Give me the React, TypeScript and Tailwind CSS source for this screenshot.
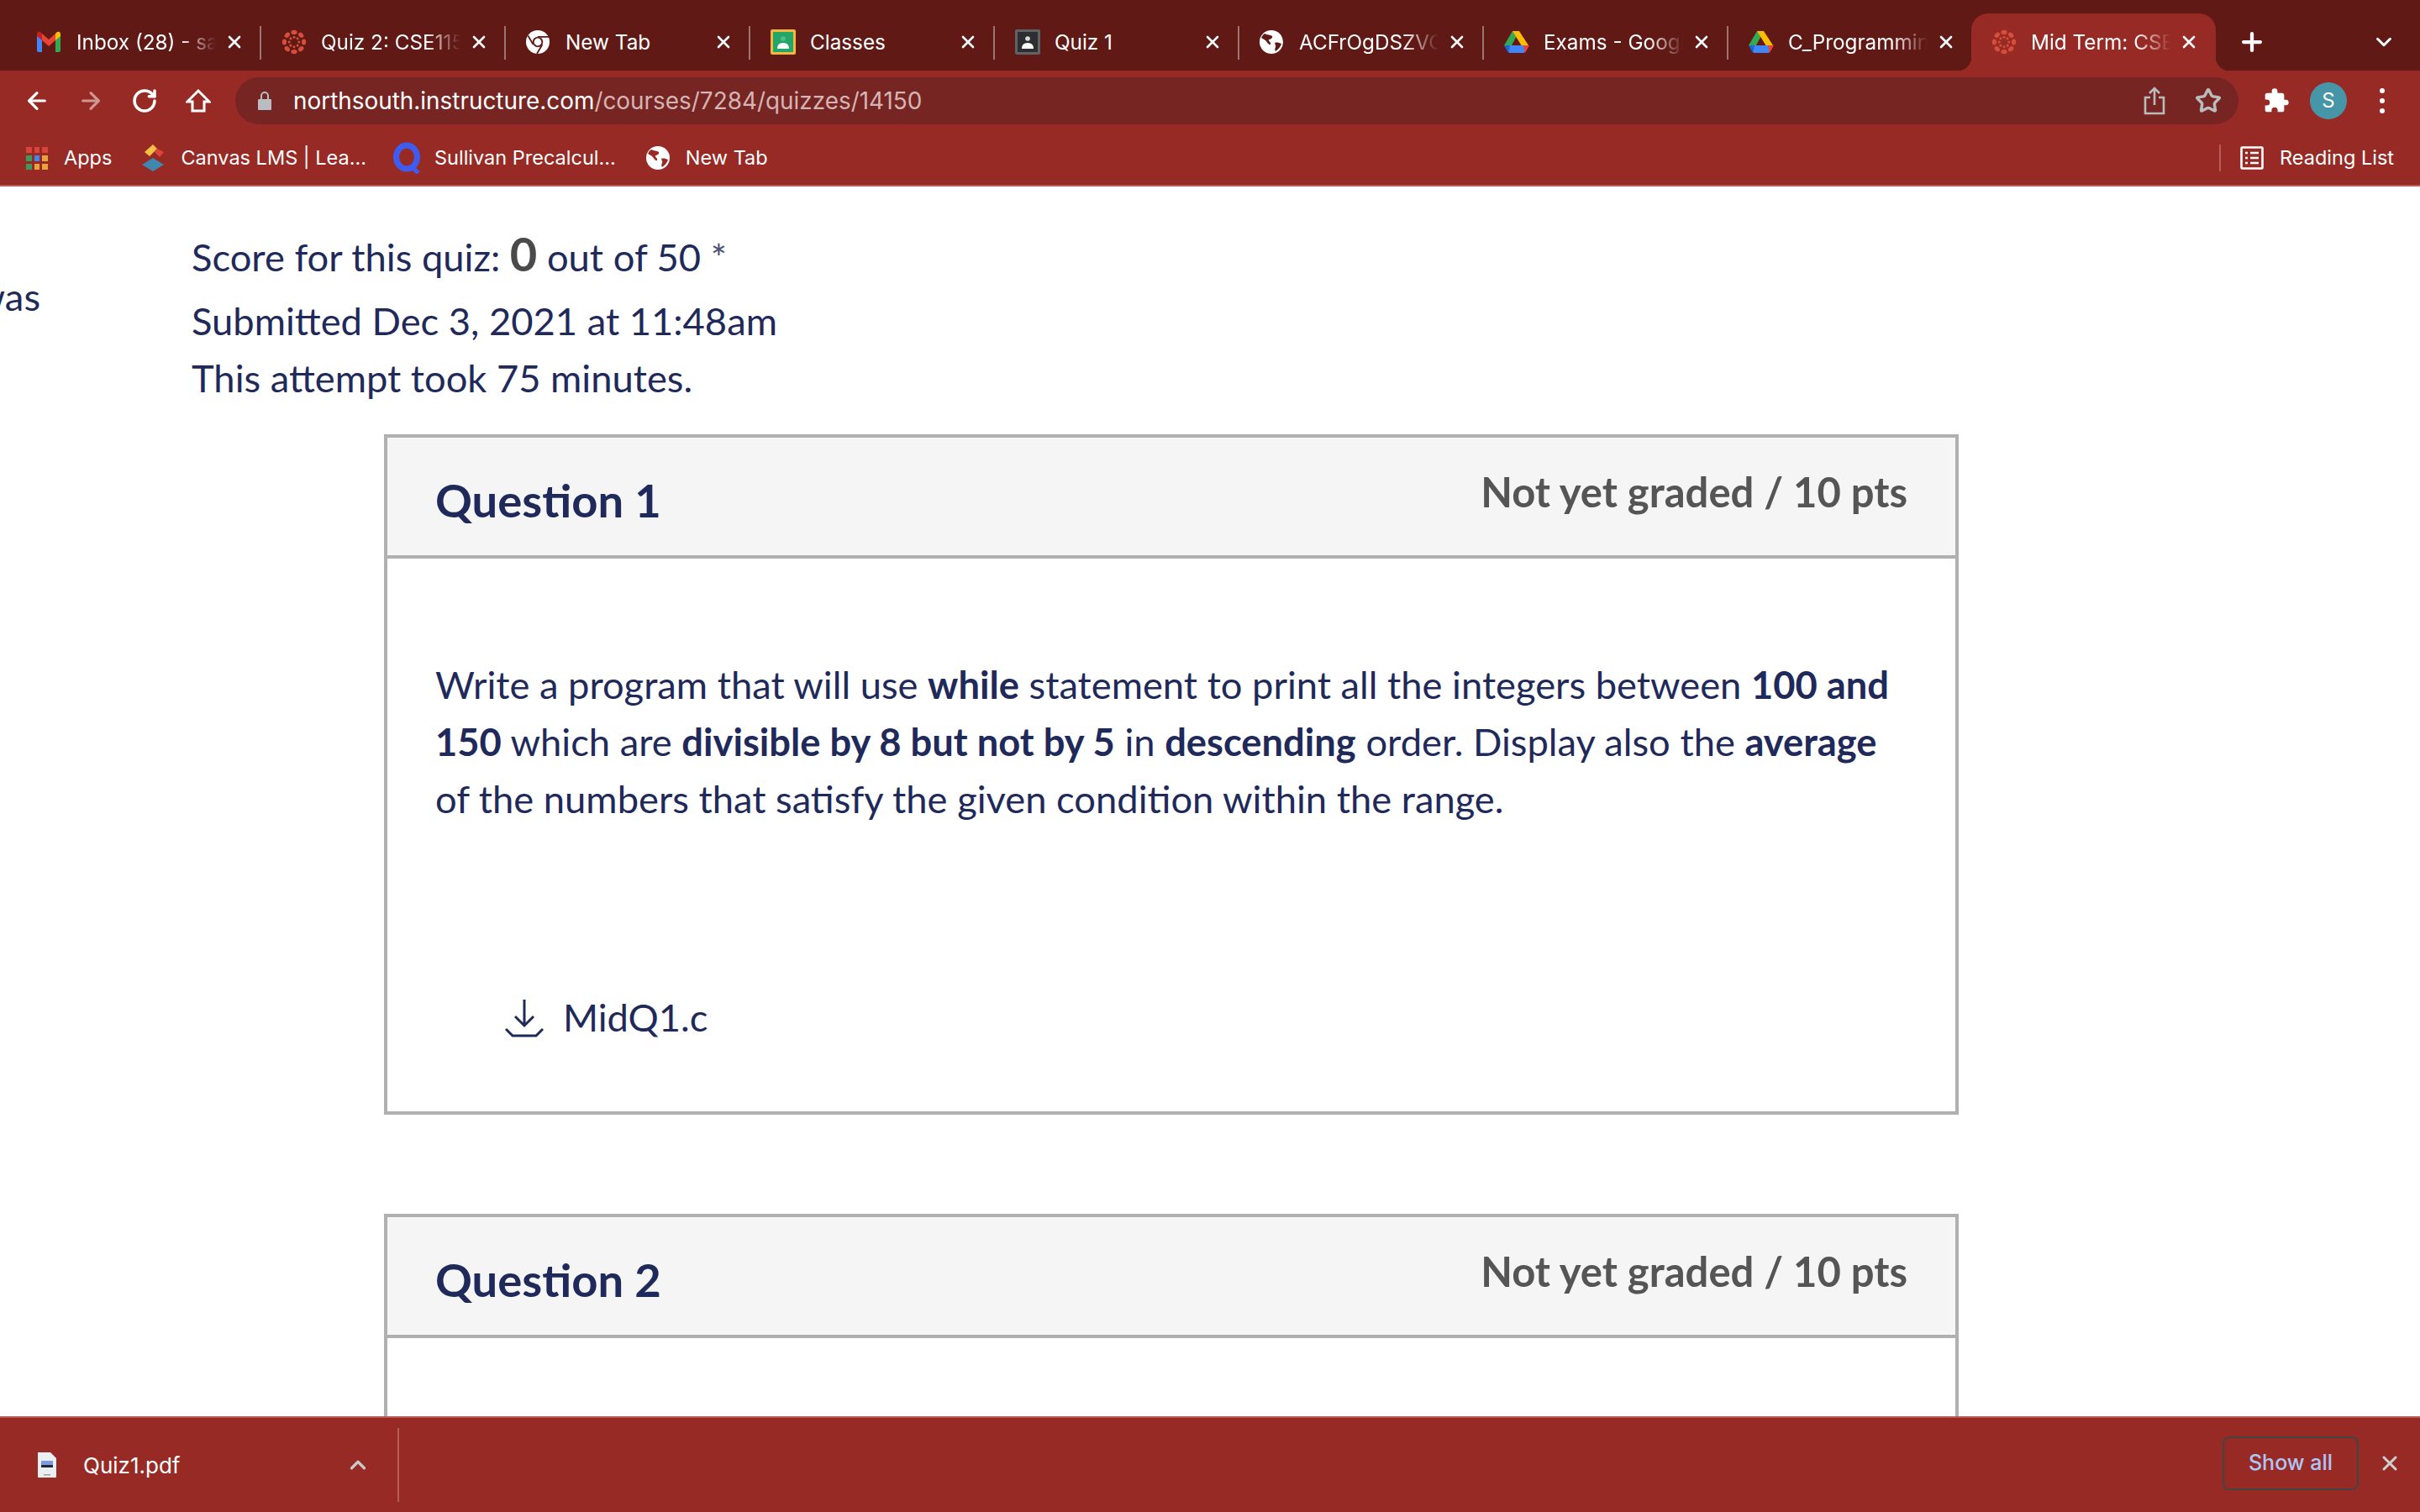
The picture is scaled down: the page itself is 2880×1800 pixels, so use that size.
import React from 'react';
import { ArrowLeft, ArrowRight, RotateCw, Star, Plus, X, ChevronDown, ChevronUp } from 'lucide-react';

const CanvasIcon = () => (
    <svg width="30" height="30" viewBox="0 0 30 30" className="shrink-0">
        {[0, 45, 90, 135, 180, 225, 270, 315].map((a) => (
            <g key={a} transform={`rotate(${a} 15 15)`} fill="#d64f3c">
                <ellipse cx="15" cy="3.4" rx="3.6" ry="2.6" />
                <circle cx="15" cy="9.2" r="1.5" />
            </g>
        ))}
    </svg>
);

const GmailIcon = () => (
    <svg width="28" height="26" viewBox="0 0 28 26" className="shrink-0">
        <path d="M0 4v19q0 2 2 2h4V11z" fill="#4285f4" />
        <path d="M28 4v19q0 2-2 2h-4V11z" fill="#34a853" />
        <path d="M6 11v-8l8 7 8-7v8l-8 7z" fill="#ea4335" />
        <path d="M0 4q0-4 4-3l2 2v8L0 6z" fill="#c5221f" />
        <path d="M28 4q0-4-4-3l-2 2v8l6-5z" fill="#fbbc04" />
    </svg>
);

const ChromeIcon = () => (
    <svg width="28" height="28" viewBox="0 0 28 28" className="shrink-0">
        <circle cx="14" cy="14" r="14" fill="#fff" />
        <circle cx="14" cy="14" r="6.2" fill="#611916" />
        <circle cx="14" cy="14" r="4.4" fill="#fff" />
        <path d="M14 7.8h13M8.6 17 2.4 6.5M19.4 17l-6.4 11" stroke="#611916" strokeWidth="1.8" fill="none" />
    </svg>
);

const GlobeIcon = ({ dark }: { dark: string }) => (
    <svg width="28" height="28" viewBox="0 0 28 28" className="shrink-0">
        <circle cx="14" cy="14" r="14" fill="#fff" />
        <path d="M6 4c3 2 7 1 9 3 1 2-2 4-4 4-1 2 3 3 2 6-2 1-4-3-6-5L2 9c1-2 2-4 4-5z" fill={dark} />
        <path d="M18 15c3-1 5 0 8 1-1 4-4 7-7 9-2-3 1-5 0-7z" fill={dark} />
    </svg>
);

const ClassroomIcon = ({ gray }: { gray?: boolean }) => (
    <svg width="30" height="30" viewBox="0 0 30 30" className="shrink-0">
        <rect x="0" y="0" width="30" height="30" rx="2" fill={gray ? '#5f6368' : '#f4b73e'} />
        <rect x="3" y="3" width="24" height="24" fill={gray ? '#2d2e30' : '#25a667'} />
        <circle cx="15" cy="11" r="2.8" fill={gray ? '#dadce0' : '#57bb8a'} />
        <path d="M8 23q0-7 7-7t7 7z" fill="#fff" />
    </svg>
);

const DriveIcon = () => (
    <svg width="30" height="28" viewBox="0 0 30 28" className="shrink-0">
        <path d="M10 1h8l-9 17H0z" fill="#34a853" />
        <path d="M10 1h8l11 17h-8.500z" fill="#fbbc04" />
        <path d="M7 18h16l5 1-4 8H6l-5-8z" fill="#4285f4" />
        <path d="M23 18h7l-5 9z" fill="#ea4335" />
        <path d="M0 18h7l-2 9z" fill="#1967d2" />
    </svg>
);

const tabs = [
    { icon: <GmailIcon />, title: 'Inbox (28) - sabiha', fade: true },
    { icon: <CanvasIcon />, title: 'Quiz 2: CSE115 Programming', fade: true },
    { icon: <ChromeIcon />, title: 'New Tab', fade: false },
    { icon: <ClassroomIcon />, title: 'Classes', fade: false },
    { icon: <ClassroomIcon gray />, title: 'Quiz 1', fade: false },
    { icon: <GlobeIcon dark="#611916" />, title: 'ACFrOgDSZVGkLm', fade: true },
    { icon: <DriveIcon />, title: 'Exams - Google Drive', fade: true },
    { icon: <DriveIcon />, title: 'C_Programming - Google', fade: true },
];

const fadeMask = '[mask-image:linear-gradient(to_right,black_75%,transparent_100%)]';

const ChromeTab = ({ icon, title, fade, active }: { icon: React.ReactNode; title: string; fade: boolean; active?: boolean }) => (
    <div className={`relative flex items-center w-[291px] shrink-0 pl-[24px] h-[68px] ${active ? 'bg-[#982a25] rounded-t-[20px] -ml-[2px]' : ''}`}>
        {active && <div className="absolute left-[-16px] bottom-0 w-[16px] h-[16px] bg-[radial-gradient(circle_at_0_0,#611916_16px,#982a25_16.500px)]" />}
        {active && <div className="absolute right-[-16px] bottom-0 w-[16px] h-[16px] bg-[radial-gradient(circle_at_100%_0,#611916_16px,#982a25_16.500px)]" />}
        <div className="w-[47px] shrink-0">{icon}</div>
        <div className={`w-[166px] shrink-0 overflow-hidden whitespace-nowrap text-[24.300px] leading-[32px] text-white ${fade ? fadeMask : ''}`}>
            {title}
        </div>
        <X size={24} strokeWidth={2.6} className="text-white ml-[10px] shrink-0" />
    </div>
);

const Separator = () => <div className="w-[2px] h-[40px] bg-[#9c7573] -ml-[2px] shrink-0" />;

const DownloadArrow = () => (
    <svg width="46" height="46" viewBox="0 0 46 46" fill="none" stroke="#1f2a5a" strokeWidth="3" className="shrink-0 mt-[2px]">
        <path d="M23 1v31M12 21l11 11 11-11M1 36l8 8h28l8-8" />
    </svg>
);

const Question = ({ name, children }: { name: string; children?: React.ReactNode }) => (
    <div className="ml-[457px] w-[1874px] border-[4px] border-[#b0b0b0] shrink-0">
        <div className="flex justify-between bg-[#f5f5f5] h-[144px] border-b-[4px] border-[#b0b0b0] pl-[57px] pr-[57px]">
            <div className="text-[54.400px] leading-[72px] font-bold text-[#1f2a5a] pt-[38px]">{name}</div>
            <div className="text-[49px] leading-[64px] font-bold text-[#555555] pt-[32px]">Not yet graded / 10 pts</div>
        </div>
        {children}
    </div>
);

export default function App() {
    return (
        <div className="flex flex-col h-[1800px] w-[2880px] overflow-hidden bg-white font-['Inter',sans-serif]">
            {/* tab strip */}
            <div className="flex items-end h-[84px] bg-[#611916] pl-[20px] shrink-0">
                {tabs.map((t, i) => (
                    <React.Fragment key={t.title}>
                        <ChromeTab icon={t.icon} title={t.title} fade={t.fade} />
                        {i < tabs.length - 1 && <div className="self-center mt-[17px]"><Separator /></div>}
                    </React.Fragment>
                ))}
                <ChromeTab icon={<CanvasIcon />} title="Mid Term: CSE115" fade active />
                <Plus size={34} strokeWidth={3} className="text-white ml-[26px] mb-[17px] shrink-0" />
                <ChevronDown size={30} strokeWidth={2.4} className="text-white ml-[125px] mb-[19px] shrink-0" />
            </div>

            {/* toolbar */}
            <div className="flex items-center h-[84px] bg-[#982a25] pl-[28px] pb-[12px] shrink-0">
                <ArrowLeft size={32} strokeWidth={2.4} className="text-white shrink-0" />
                <ArrowRight size={32} strokeWidth={2.4} className="text-[#cf9693] ml-[32px] shrink-0" />
                <RotateCw size={32} strokeWidth={2.6} className="text-white ml-[32px] shrink-0" />
                <svg width="30" height="30" viewBox="0 0 30 30" fill="none" stroke="#fff" strokeWidth="3" className="ml-[33px] shrink-0">
                    <path d="M15 3 2 16h6v11h14V16h6z" />
                </svg>
                <div className="flex items-center w-[2384px] h-[56px] ml-[29px] rounded-full bg-[#772523] pl-[26px] shrink-0">
                    <svg width="18" height="24" viewBox="0 0 18 24" fill="#b9bdc2" className="shrink-0">
                        <path d="M4 10V6a5 5 0 0 1 10 0v4h2a1 1 0 0 1 1 1v11a1 1 0 0 1-1 1H2a1 1 0 0 1-1-1V11a1 1 0 0 1 1-1zm2 0h6V6a3 3 0 0 0-6 0z" />
                    </svg>
                    <div className="ml-[25px] text-[27.900px] leading-[40px] text-white whitespace-nowrap">
                        northsouth.instructure.com<span className="text-[#d5b4b3]">/courses/7284/quizzes/14150</span>
                    </div>
                    <div className="ml-auto flex items-center gap-[34px] pr-[20px]">
                        <svg width="28" height="36" viewBox="0 0 28 36" fill="none" stroke="#b9bcbd" strokeWidth="2.6">
                            <path d="M14 23V3M8 9l6-6 6 6M9 14H3v19h22V14h-6" />
                        </svg>
                        <Star size={32} strokeWidth={2.6} className="text-[#b9bcbd]" />
                    </div>
                </div>
                <svg width="32" height="32" viewBox="0 0 24 24" fill="#fff" className="ml-[29px] shrink-0">
                    <path d="M20.500 11H19V7a2 2 0 0 0-2-2h-4V3.500a2.500 2.500 0 0 0-5 0V5H4a2 2 0 0 0-2 2v3.800h1.500a2.700 2.700 0 0 1 0 5.400H2V20a2 2 0 0 0 2 2h3.800v-1.500a2.700 2.700 0 0 1 5.400 0V22H17a2 2 0 0 0 2-2v-4h1.500a2.500 2.500 0 0 0 0-5z" />
                </svg>
                <div className="flex items-center justify-center w-[44px] h-[44px] rounded-full bg-[#4696a8] ml-[24px] text-[24px] text-white shrink-0">S</div>
                <div className="flex flex-col gap-[6px] ml-[39px] shrink-0">
                    <div className="w-[6px] h-[6px] rounded-full bg-white" />
                    <div className="w-[6px] h-[6px] rounded-full bg-white" />
                    <div className="w-[6px] h-[6px] rounded-full bg-white" />
                </div>
            </div>

            {/* bookmarks */}
            <div className="flex items-center h-[54px] bg-[#982a25] border-b-[2px] border-[#b85a55] pb-[12px] text-[23.500px] text-white shrink-0">
                <div className="grid grid-cols-3 gap-x-[3px] gap-y-[3px] w-[26px] ml-[31px] shrink-0">
                    {['#d9443b', '#d9443b', '#d9443b', '#3c9a5f', '#4285f4', '#e8a33d', '#3c9a5f', '#e8a33d', '#e8a33d'].map((c, i) => (
                        <div key={i} className="h-[7px]" style={{ backgroundColor: c }} />
                    ))}
                </div>
                <span className="ml-[19px]">Apps</span>
                <svg width="30" height="32" viewBox="0 0 30 32" className="ml-[34px] shrink-0">
                    <path d="M15 0l5 5-9 9-6-5z" fill="#f5c142" />
                    <path d="M20 5l8 4-5 6-6-6z" fill="#e0443a" />
                    <path d="M15 16l13 8-13 8-13-8z" fill="#3f87ae" />
                </svg>
                <span className="ml-[18px]">Canvas LMS | Lea...</span>
                <svg width="34" height="38" viewBox="0 0 34 38" fill="none" className="ml-[32px] shrink-0">
                    <ellipse cx="16" cy="18" rx="12.500" ry="14" stroke="#3f5cf0" strokeWidth="7" />
                    <path d="M22 30l8 7" stroke="#3f5cf0" strokeWidth="5" />
                </svg>
                <span className="ml-[15px]">Sullivan Precalcul...</span>
                <div className="ml-[36px]"><GlobeIcon dark="#982a25" /></div>
                <span className="ml-[19px]">New Tab</span>
                <div className="ml-auto w-[2px] h-[32px] bg-[#b85a55]" />
                <svg width="28" height="28" viewBox="0 0 28 28" fill="none" stroke="#fff" strokeWidth="2.6" className="ml-[23px] shrink-0">
                    <rect x="1.500" y="1.500" width="25" height="25" rx="1" />
                    <path d="M6 8h3M12 8h10M6 14h3M12 14h10M6 20h3M12 20h10" />
                </svg>
                <span className="ml-[19px] mr-[31px]">Reading List</span>
            </div>

            {/* page */}
            <div className="flex flex-col flex-1 min-h-0 overflow-hidden font-['Lato',sans-serif] text-[#1f2a5a]">
                <div className="flex shrink-0 h-[295px]">
                    <div className="flex justify-end w-[48px] h-[200px] overflow-hidden shrink-0 pt-[97px] text-[45.300px] leading-[68px] whitespace-nowrap">Biswas</div>
                    <div className="ml-[180px] pt-[46px] text-[45.300px] leading-[68px]">
                        <div className="h-[80px]">
                            Score for this quiz: <span className="text-[56px] font-bold text-[#4a4a4a]">0</span> out of 50 <span className="text-[#4a5275]">*</span>
                        </div>
                        <div>Submitted Dec 3, 2021 at 11:48am</div>
                        <div>This attempt took 75 minutes.</div>
                    </div>
                </div>

                <Question name="Question 1">
                    <div className="h-[658px] pl-[57px] pr-[56px] pt-[116px]">
                        <div className="text-[45.300px] leading-[68px]">
                            Write a program that will use <b>while</b> statement to print all the integers between <b>100 and 150</b> which are <b>divisible by 8 but not by 5</b> in <b>descending</b> order. Display also the <b>average</b> of the numbers that satisfy the given condition within the range.
                        </div>
                        <div className="flex items-center ml-[83px] mt-[192px]">
                            <DownloadArrow />
                            <span className="ml-[23px] text-[45.300px] leading-[68px]">MidQ1.c</span>
                        </div>
                    </div>
                </Question>

                <div className="h-[118px] shrink-0" />
                <Question name="Question 2">
                    <div className="h-[200px]" />
                </Question>
            </div>

            {/* downloads shelf */}
            <div className="flex items-center h-[114px] bg-[#982a25] border-t-[2px] border-[#b85a55] text-white shrink-0">
                <svg width="24" height="30" viewBox="0 0 24 30" className="ml-[44px] shrink-0">
                    <path d="M1 0h15l7 7v22a1 1 0 0 1-1 1H2a1 1 0 0 1-1-1z" fill="#eceff1" />
                    <rect x="5" y="10" width="14" height="8" fill="#7c9be0" />
                    <rect x="5" y="15" width="14" height="3" fill="#1f2937" />
                    <rect x="8" y="26" width="8" height="1.500" fill="#9aa0a6" />
                </svg>
                <span className="ml-[31px] text-[26px]">Quiz1.pdf</span>
                <ChevronUp size={30} strokeWidth={2.6} className="text-[#c9c9c9] ml-[197px] shrink-0" />
                <div className="w-[2px] h-[88px] bg-[#b85a55] ml-[32px] shrink-0" />
                <div className="ml-auto flex items-center justify-center w-[162px] h-[64px] rounded-[8px] border-[2px] border-[#444444] text-[25px] font-medium text-[#aec6f6] mb-[4px]">Show all</div>
                <X size={28} strokeWidth={2.6} className="text-[#cfcfcf] ml-[23px] mr-[22px] mb-[4px] shrink-0" />
            </div>
        </div>
    );
}
